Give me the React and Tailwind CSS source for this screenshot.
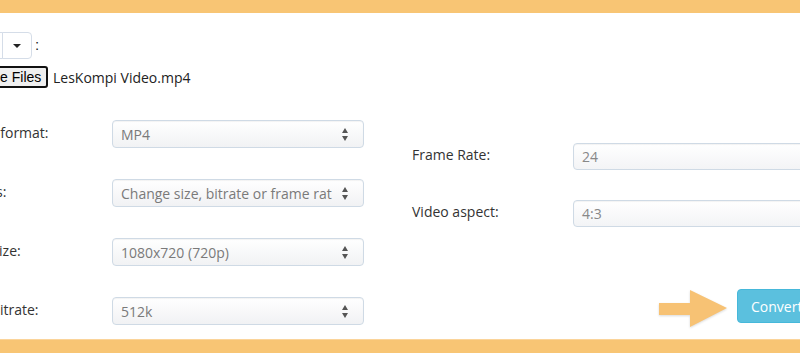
function Arrows() {
  return (
    <svg width="6" height="13" viewBox="0 0 6 13" className="shrink-0">
      <path d="M3 0L6 5H0z" fill="#555" />
      <path d="M3 13L6 8H0z" fill="#555" />
    </svg>
  );
}

function SelectBox({ value }) {
  return (
    <div className="w-[252px] h-[28px] border border-[#cfdae5] rounded-[4px] bg-linear-to-b from-white to-[#f1f2f4] shadow-[inset_0_1px_1px_rgba(0,0,0,0.05)] flex items-center pl-[8px] pr-[15px]">
      <span className="flex-1 min-w-0 mr-[10px] text-[14px] text-[#7a7a7a] whitespace-nowrap overflow-hidden">{value}</span>
      <Arrows />
    </div>
  );
}

function InputBox({ value }) {
  return (
    <div className="w-[252px] h-[27px] border border-[#cfdae5] rounded-[4px] bg-linear-to-b from-white to-[#f3f4f6] shadow-[inset_0_1px_1px_rgba(0,0,0,0.05)] flex items-center pl-[8px]">
      <span className="text-[14px] text-[#888]">{value}</span>
    </div>
  );
}

export default function App() {
  const left = [
    ["Output format:", "MP4", "pl-[0px]"],
    ["Options:", "Change size, bitrate or frame rate", "pl-[1px]"],
    ["Video size:", "1080x720 (720p)", "pl-[2px]"],
    ["Video bitrate:", "512k", "pl-[1px]"],
  ];
  const right = [
    ["Frame Rate:", "24"],
    ["Video aspect:", "4:3"],
  ];
  return (
    <div className="w-[800px] h-[353px] overflow-hidden bg-white flex flex-col font-['Open_Sans',sans-serif] text-[14px] text-[#333]">
      <div className="h-[13px] shrink-0 bg-[#f8c574]" />
      <div className="flex-1 -ml-[50px] w-[900px] flex flex-col">
        <div className="mt-[19px] flex items-center h-[27px]">
          <div className="flex h-[27px]">
            <div className="w-[53px] border border-[#d5dde8] rounded-l-[4px] bg-white" />
            <div className="w-[30px] -ml-px border border-[#d5dde8] rounded-r-[4px] bg-white flex items-center justify-center">
              <svg width="8" height="4" viewBox="0 0 8 4">
                <path d="M0 0h8L4 4z" fill="#222" />
              </svg>
            </div>
          </div>
          <span className="ml-[3px] font-['Liberation_Sans',sans-serif] text-[15px] text-[#222]">:</span>
        </div>
        <div className="mt-[7px] flex items-center h-[22px]">
          <div className="ml-[3px] w-[95px] h-[22px] border-2 border-[#111] rounded-[3px] bg-[#efefef] flex items-center justify-center font-['Liberation_Sans',sans-serif] text-[14px] text-black whitespace-nowrap">
            Choose Files
          </div>
          <span className="ml-[5px] text-[14px] text-[#222]">LesKompi Video.mp4</span>
        </div>
        <div className="mt-[32px] flex items-start">
          <div className="w-[414px] flex flex-col gap-[31px]">
            {left.map(([l, v, p]) => (
              <div key={l} className="flex items-center">
                <div className={"w-[162px] -mt-[4px] text-[14px] text-[#333] whitespace-nowrap " + p}>{l}</div>
                <SelectBox value={v} />
              </div>
            ))}
          </div>
          <div className="ml-[48px] w-[413px] mt-[23px] flex flex-col">
            <div className="flex flex-col gap-[30px]">
              {right.map(([l, v]) => (
                <div key={l} className="flex items-center">
                  <div className="w-[161px] text-[14px] text-[#333] -mt-[5px]">{l}</div>
                  <InputBox value={v} />
                </div>
              ))}
            </div>
            <div className="mt-[62px] flex justify-end items-start">
              <svg width="70" height="40" viewBox="0 0 70 40" className="mt-[1px] mr-[8px] drop-shadow-[0_1px_1px_rgba(0,0,0,0.15)]">
                <rect x="0" y="13" width="33" height="12" fill="#f7c274" />
                <path d="M31 0L68 18L31 37z" fill="#f7c274" />
              </svg>
              <div className="w-[88px] h-[34px] bg-[#5bc0de] border border-[#46b8da] rounded-[4px] flex items-center pl-[13px] text-white text-[14px]">
                Convert
              </div>
            </div>
          </div>
        </div>
      </div>
      <div className="h-[14px] shrink-0 bg-[#f8c574] border-t border-[#fbd49a]" />
    </div>
  );
}
